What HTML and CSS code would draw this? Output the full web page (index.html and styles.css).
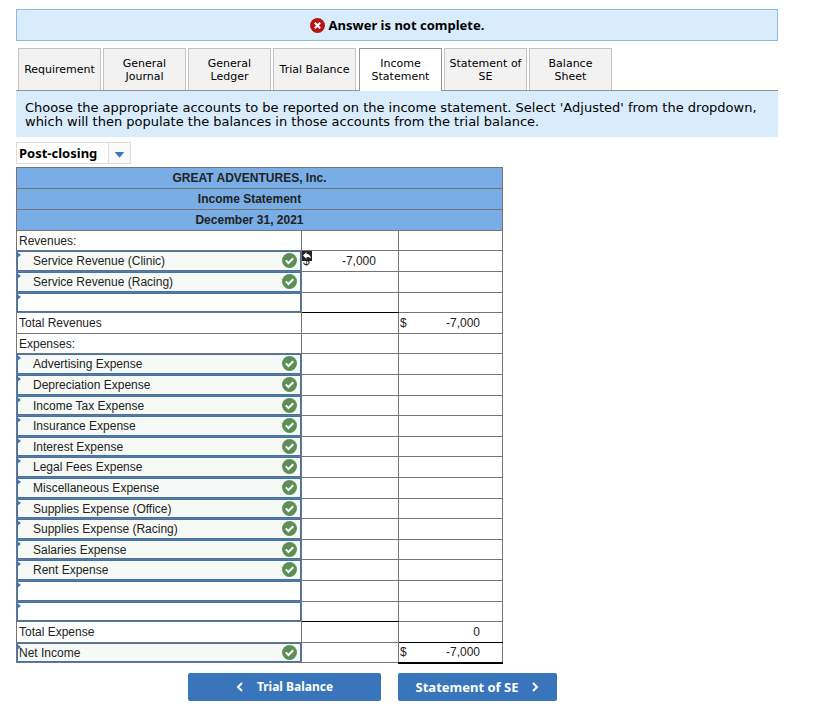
FILE: index.html
```html
<!DOCTYPE html>
<html lang="en">
<head>
<meta charset="utf-8">
<title>Income Statement</title>
<link rel="stylesheet" href="styles.css">
<script src="sheet.js" defer></script>
</head>
<body>
<svg class="defs" aria-hidden="true">
  <symbol id="check" viewBox="0 0 15 15"><circle cx="7.5" cy="7.5" r="7.5" fill="#5d8f55"/><path d="M3.8 7.4l2.600 2.600 4.900-4.800" fill="none" stroke="#fff" stroke-width="2"/></symbol>
</svg>
<main>
  <div class="banner">
    <svg class="banner-icon" viewBox="0 0 15 15" aria-hidden="true"><circle cx="7.5" cy="7.5" r="7.5" fill="#b81414"/><path d="M4.8 4.8l5.4 5.4M10.2 4.8l-5.4 5.4" stroke="#fff" stroke-width="2"/></svg>
    <span>Answer is not complete.</span>
  </div>
  <div class="tabs" role="tablist">
    <button class="tab" role="tab">Requirement</button>
    <button class="tab" role="tab">General Journal</button>
    <button class="tab" role="tab">General Ledger</button>
    <button class="tab" role="tab">Trial Balance</button>
    <button class="tab active" role="tab" aria-selected="true">Income Statement</button>
    <button class="tab" role="tab">Statement of SE</button>
    <button class="tab" role="tab">Balance Sheet</button>
  </div>
  <p class="instructions">Choose the appropriate accounts to be reported on the income statement. Select 'Adjusted' from the dropdown, which will then populate the balances in those accounts from the trial balance.</p>
  <div class="picker">
    <select aria-label="Balance type"><option>Post-closing</option></select>
    <svg class="picker-arrow" viewBox="0 0 22 20" aria-hidden="true"><path d="M6 9h10l-5 6z" fill="#3875ba"/></svg>
  </div>
  <table class="sheet">
    <colgroup><col><col class="sub"><col class="total"></colgroup>
    <thead>
      <tr><th colspan="3">GREAT ADVENTURES, Inc.</th></tr>
      <tr><th colspan="3">Income Statement</th></tr>
      <tr><th colspan="3">December 31, 2021</th></tr>
    </thead>
    <tbody id="rows"></tbody>
  </table>
  <nav class="pager">
    <button class="page-button previous"><svg viewBox="0 0 8 12" aria-hidden="true"><path d="M6 2L2 6l4 4"/></svg>Trial Balance</button>
    <button class="page-button next">Statement of SE<svg viewBox="0 0 8 12" aria-hidden="true"><path d="M2 2l4 4-4 4"/></svg></button>
  </nav>
</main>
</body>
</html>
```
FILE: styles.css
```css
* { box-sizing: border-box; }
body {
  margin: 0;
  padding: 9px 51px 20px 16px;
  background: #fff;
  color: #000;
  font-family: "DejaVu Sans", sans-serif;
  font-size: 13px;
}
button, select, input { font: inherit; color: inherit; margin: 0; }
.defs { position: absolute; width: 0; height: 0; }
.banner {
  display: flex;
  align-items: center;
  justify-content: center;
  gap: 4px;
  height: 32px;
  background: #d9ecfb;
  border: 1px solid #8fb7e0;
  font-family: "Noto Sans", sans-serif;
  font-weight: 700;
}
.banner-icon { width: 15px; height: 15px; }
.tabs {
  display: flex;
  gap: 2px;
  margin-top: 7px;
  padding-left: 2px;
  border-bottom: 1px solid #949494;
}
.tab {
  width: 83px;
  height: 42px;
  padding: 0 2px;
  border: 1px solid #c4c4c4;
  border-bottom: 0;
  background: #f2f2f2;
  font-size: 11px;
  line-height: 13px;
}
.tab.active {
  height: 43px;
  margin: 0 0 -1px 1px;
  border-color: #949494;
  background: #fff;
}
.instructions {
  margin: 0;
  padding: 10px 9px 8px;
  background: #d9ecfb;
  font-size: 13px;
  line-height: 14px;
}
.picker {
  position: relative;
  width: 115px;
  margin-top: 5px;
}
.picker select {
  display: block;
  width: 100%;
  height: 22px;
  padding: 0 0 0 2px;
  border: 1px solid #ddd;
  border-radius: 0;
  background: #fff;
  appearance: none;
  font-family: "Noto Sans", sans-serif;
  font-weight: 700;
}
.picker-arrow {
  position: absolute;
  top: 1px;
  right: 1px;
  width: 22px;
  height: 20px;
  border-left: 1px solid #ddd;
  background: #fafafa;
  pointer-events: none;
}
.sheet {
  width: 100%;
  max-width: 487px;
  margin-top: 3px;
  border-collapse: collapse;
  table-layout: fixed;
  font-family: "Liberation Sans", Arial, sans-serif;
  font-size: 12px;
  line-height: 14px;
  color: #222;
}
.sheet tr { --row: 21px; height: var(--row); }
.sheet tbody tr:nth-child(5n+1), .sheet tbody tr:nth-child(5n+4) { --row: 20px; }
.sub { width: 97px; }
.total { width: 104px; }
.sheet th, .sheet td { padding: 0; border: 1px solid #757575; }
.sheet th { background: #79ade6; background-clip: padding-box; padding-right: 20px; }
.sheet td.label { padding-left: 2px; }
.entry { position: relative; }
.entry input {
  display: block;
  width: 100%;
  height: calc(var(--row) - 1px);
  padding: 0 20px 0 15px;
  border: 1px solid #3875ba;
  border-radius: 0;
  background: #fff;
  outline: 0;
}
.entry.correct input { background: #f6f9f6; }
.entry.flush input { padding-left: 1px; }
.entry::before {
  content: "";
  position: absolute;
  top: 1px;
  left: 0;
  border: solid transparent;
  border-width: 3px 0 3px 4px;
  border-left-color: #3875ba;
}
.mark { position: absolute; top: 2px; right: 4px; width: 15px; height: 15px; }
.amount { position: relative; display: flex; justify-content: space-between; padding: 0 22px 0 1px; }
.badge { position: absolute; top: -3px; left: 0; width: 10px; height: 10px; }
.sheet td.rule { border-bottom-color: #000; }
.sheet td.final { border-bottom: 2px solid #000; }
.pager { display: flex; gap: 17px; margin: 9px 0 0 172px; }
.page-button {
  display: flex;
  align-items: center;
  justify-content: center;
  gap: 13px;
  width: 159px;
  height: 28px;
  padding: 0;
  border: 0;
  border-radius: 2px;
  background: #3875ba;
  color: #fff;
  font-family: "Noto Sans", sans-serif;
  font-size: 12px;
  font-weight: 700;
}
.page-button.previous { width: 193px; }
.page-button.next { font-size: 13px; }
.page-button svg { width: 8px; height: 12px; fill: none; stroke: #fff; stroke-width: 2; }
```
FILE: sheet.js
```js
const rows = [
  { label: "Revenues:" },
  { entry: "Service Revenue (Clinic)", sub: "-7,000", dollar: true, badge: true },
  { entry: "Service Revenue (Racing)" },
  { entry: "", subRule: "rule" },
  { label: "Total Revenues", total: "-7,000", dollar: true },
  { label: "Expenses:" },
  ...["Advertising", "Depreciation", "Income Tax", "Insurance", "Interest", "Legal Fees", "Miscellaneous"].map(n => ({ entry: n + " Expense" })),
  { entry: "Supplies Expense (Office)" },
  { entry: "Supplies Expense (Racing)" },
  { entry: "Salaries Expense" },
  { entry: "Rent Expense" },
  { entry: "" },
  { entry: "", subRule: "rule" },
  { label: "Total Expense", total: "0", totalRule: "rule" },
  { entry: "Net Income", flush: true, total: "-7,000", dollar: true, totalRule: "final" }
];

const arrow = '<svg class="badge" viewBox="0 0 10 10" aria-hidden="true"><path d="M0 0h10v10H0z" fill="#222"/><path d="M1 4.500L4.500 1v2C7 3 8.500 4.500 9 7.500 7.500 6 6.500 6 4.500 6v2z" fill="#fff"/></svg>';

function amount(value, row) {
  if (!value) return "";
  return `<div class="amount"><span>${row.dollar ? "$" : ""}</span><span>${value}</span>${row.badge ? arrow : ""}</div>`;
}

function account(row, i) {
  if (row.label) return `<td class="label">${row.label}</td>`;
  const names = ["entry", row.entry && "correct", row.flush && "flush"].filter(Boolean).join(" ");
  const mark = row.entry ? '<svg class="mark" aria-hidden="true"><use href="#check"/></svg>' : "";
  return `<td><div class="${names}"><input type="text" aria-label="Account ${i + 1}" value="${row.entry}">${mark}</div></td>`;
}

document.getElementById("rows").innerHTML = rows.map((row, i) =>
  `<tr>${account(row, i)}<td class="${row.subRule || ""}">${amount(row.sub, row)}</td><td class="${row.totalRule || ""}">${amount(row.total, row)}</td></tr>`
).join("");
```
